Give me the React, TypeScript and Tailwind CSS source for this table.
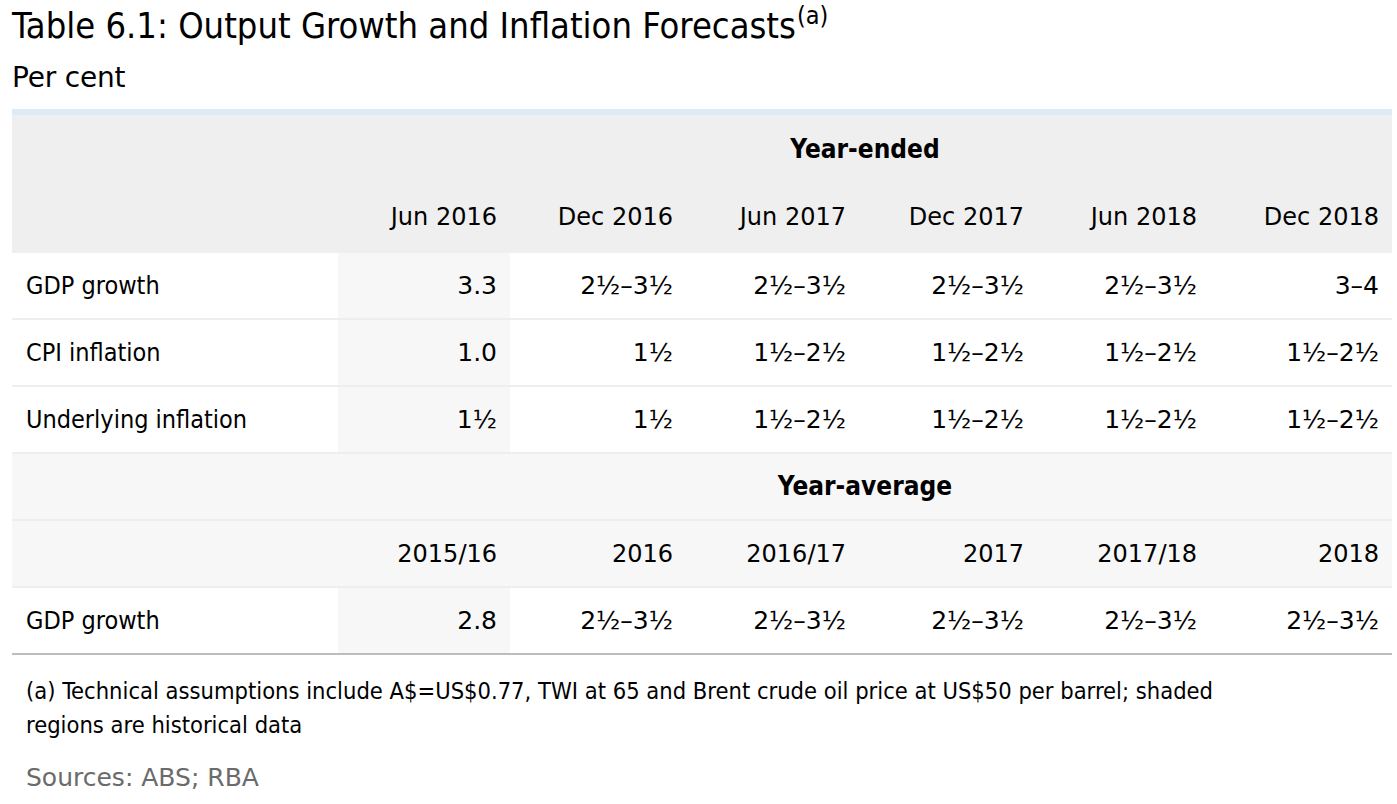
const COND = "font-['DejaVu_Sans_Condensed','DejaVu_Sans',sans-serif]";
const WIDE = "font-['DejaVu_Sans',sans-serif]";
const COLS = "grid grid-cols-[326px_172px_176px_173px_178px_173px_182px]";

type Row = { label: string; values: string[] };

const yearEnded = ["Jun 2016", "Dec 2016", "Jun 2017", "Dec 2017", "Jun 2018", "Dec 2018"];
const yearAverage = ["2015/16", "2016", "2016/17", "2017", "2017/18", "2018"];

const endedRows: Row[] = [
  { label: "GDP growth", values: ["3.3", "2½–3½", "2½–3½", "2½–3½", "2½–3½", "3–4"] },
  { label: "CPI inflation", values: ["1.0", "1½", "1½–2½", "1½–2½", "1½–2½", "1½–2½"] },
  { label: "Underlying inflation", values: ["1½", "1½", "1½–2½", "1½–2½", "1½–2½", "1½–2½"] },
];

const averageRows: Row[] = [
  { label: "GDP growth", values: ["2.8", "2½–3½", "2½–3½", "2½–3½", "2½–3½", "2½–3½"] },
];

// first value column is historical data, so it gets the shading
function DataRow({ row, last }: { row: Row; last?: boolean }) {
  return (
    <div
      className={`${COLS} h-[67px] border-b-2 ${last ? "border-[#bdbdbd]" : "border-[#eeeeee]"}`}
    >
      <div className={`${COND} flex items-center pl-[14px] text-[25px]`}>{row.label}</div>
      {row.values.map((v, i) => (
        <div
          key={i}
          className={`${WIDE} flex items-center justify-end pr-[13px] text-[25px] ${i === 0 ? "bg-[#f7f7f7]" : ""}`}
        >
          {v}
        </div>
      ))}
    </div>
  );
}

export default function App() {
  return (
    <div className="bg-white text-black pl-[12px] pt-[4px] min-h-[804px]">
      <h1 className={`${COND} text-[36px] leading-[44px] whitespace-nowrap`}>
        Table 6.1: Output Growth and Inflation Forecasts
        <span className="relative -top-[14px] ml-[1px] text-[25px]">(a)</span>
      </h1>
      <p className={`${WIDE} mt-[8px] text-[28px] leading-[36px] tracking-[-0.2px]`}>Per cent</p>

      <div className="mt-[13px] w-[1380px]">
        <div className="h-[6px] bg-[#dcebfa]" />
        <div className="bg-[#efefef]">
          <div className={`${COLS} h-[69px]`}>
            <div />
            <div className={`${COND} col-span-6 flex items-center justify-center text-[26px] font-bold`}>
              Year-ended
            </div>
          </div>
          <div className={`${COLS} h-[69px] pb-[4px]`}>
            <div />
            {yearEnded.map((d) => (
              <div key={d} className={`${WIDE} flex items-center justify-end pr-[13px] text-[24px]`}>
                {d}
              </div>
            ))}
          </div>
        </div>

        {endedRows.map((r) => (
          <DataRow key={r.label} row={r} />
        ))}

        <div className="bg-[#f7f7f7]">
          <div className={`${COLS} h-[67px] border-b-2 border-[#eeeeee]`}>
            <div />
            <div className={`${COND} col-span-6 flex items-center justify-center text-[26px] font-bold`}>
              Year-average
            </div>
          </div>
          <div className={`${COLS} h-[67px] border-b-2 border-[#eeeeee]`}>
            <div />
            {yearAverage.map((d) => (
              <div key={d} className={`${WIDE} flex items-center justify-end pr-[13px] text-[24px]`}>
                {d}
              </div>
            ))}
          </div>
        </div>

        {averageRows.map((r) => (
          <DataRow key={r.label} row={r} last />
        ))}
      </div>

      <div className="pl-[14px] pt-[19px]">
        <p className={`${COND} w-[1240px] text-[23.5px] leading-[34px]`}>
          (a) Technical assumptions include A$=US$0.77, TWI at 65 and Brent crude oil price at US$50 per barrel; shaded regions are historical data
        </p>
        <p className={`${WIDE} mt-[18px] text-[25px] leading-[36px] text-[#6b6b6b]`}>
          Sources: ABS; RBA
        </p>
      </div>
    </div>
  );
}
